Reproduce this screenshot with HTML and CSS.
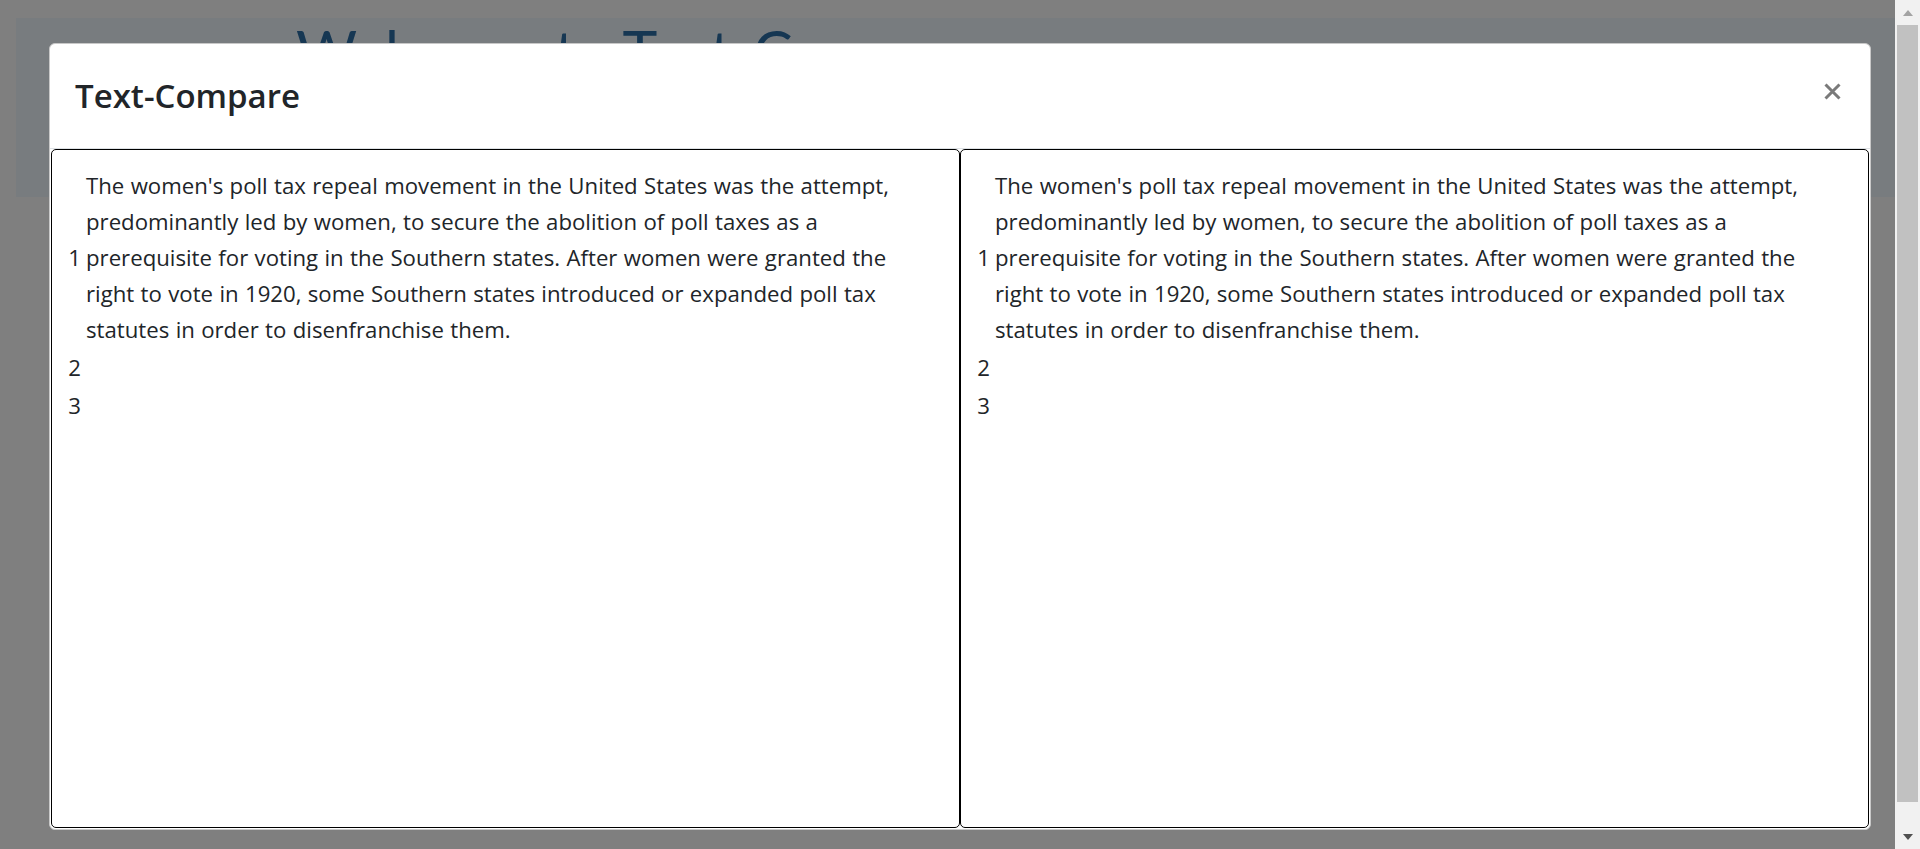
FILE: index.html
```html
<!DOCTYPE html>
<html lang="en">
<head>
<meta charset="utf-8">
<title>Text-Compare</title>
<link rel="stylesheet" href="styles.css">
</head>
<body>
<div class="page">
  <div class="viewport">
    <div class="jumbotron">
      <h1 class="hero-title">Welcome to Text-Compare</h1>
    </div>
    <div class="backdrop"></div>
    <div class="modal">
      <div class="modal-header">
        <h5 class="modal-title">Text-Compare</h5>
        <button class="close" type="button" aria-label="Close">
          <svg width="17" height="17" viewBox="0 0 17 17"><path d="M1.5 1.5 L15.5 15.5 M15.5 1.5 L1.5 15.5" stroke="currentColor" stroke-width="3" fill="none"/></svg>
        </button>
      </div>
      <div class="modal-body">
        <div class="pane">
          <div class="lines">
            <div class="ln">1</div>
            <div class="lt">The women's poll tax repeal movement in the United States was the attempt, predominantly led by women, to secure the abolition of poll taxes as a prerequisite for voting in the Southern states. After women were granted the right to vote in 1920, some Southern states introduced or expanded poll tax statutes in order to disenfranchise them.</div>
            <div class="ln">2</div>
            <div class="lt"></div>
            <div class="ln">3</div>
            <div class="lt"></div>
          </div>
        </div>
        <div class="pane">
          <div class="lines">
            <div class="ln">1</div>
            <div class="lt">The women's poll tax repeal movement in the United States was the attempt, predominantly led by women, to secure the abolition of poll taxes as a prerequisite for voting in the Southern states. After women were granted the right to vote in 1920, some Southern states introduced or expanded poll tax statutes in order to disenfranchise them.</div>
            <div class="ln">2</div>
            <div class="lt"></div>
            <div class="ln">3</div>
            <div class="lt"></div>
          </div>
        </div>
      </div>
    </div>
  </div>
  <div class="scrollbar">
    <div class="sb-btn">
      <svg width="10" height="6" viewBox="0 0 10 6"><path d="M0 6 L5 0 L10 6 Z" fill="#a3a3a3"/></svg>
    </div>
    <div class="sb-track"><div class="sb-thumb"></div></div>
    <div class="sb-btn">
      <svg width="10" height="6" viewBox="0 0 10 6"><path d="M0 0 L10 0 L5 6 Z" fill="#505050"/></svg>
    </div>
  </div>
</div>
</body>
</html>
```

FILE: styles.css
```css
html, body {
  margin: 0;
  padding: 0;
  height: 100%;
  overflow: hidden;
}

body {
  font-family: "Open Sans", "Noto Sans", sans-serif;
  color: #212529;
  background: #fff;
}

.page {
  display: flex;
  width: 1920px;
  height: 849px;
}

.viewport {
  flex: 1;
  position: relative;
  overflow: hidden;
  background: #fff;
}

.jumbotron {
  margin: 18px 0 0 16px;
  height: 179px;
  padding-left: 280px;
  background: #f0f8fe;
}

.hero-title {
  margin: 0;
  font-family: Lato, "Open Sans", sans-serif;
  font-size: 59px;
  font-weight: 400;
  line-height: 66px;
  color: #2c6ea6;
}

.backdrop {
  position: absolute;
  inset: 0;
  background: rgba(0, 0, 0, 0.5);
}

.modal {
  position: absolute;
  left: 49px;
  top: 43px;
  width: 1822px;
  height: 787px;
  box-sizing: border-box;
  border: 1px solid #c8c8c8;
  border-radius: 6px;
  background: #fff;
  display: flex;
  flex-direction: column;
}

.modal-header {
  flex: none;
  height: 104px;
  border-bottom: 1px solid #dee2e6;
  display: flex;
  align-items: center;
  justify-content: space-between;
  padding: 0 29px 0 25px;
}

.modal-title {
  margin: 0;
  font-size: 33px;
  font-weight: 600;
  line-height: 1.5;
  color: #212529;
}

.close {
  border: 0;
  background: transparent;
  padding: 0;
  margin: 0;
  color: #7a7a7a;
  display: flex;
  margin-top: -10px;
}

.modal-body {
  flex: 1;
  display: flex;
  padding: 0 1px 1px;
  min-height: 0;
}

.pane {
  width: 909px;
  box-sizing: border-box;
  border: 1px solid #000;
  border-radius: 5px;
  padding-top: 17px;
}

.lines {
  display: grid;
  grid-template-columns: 29px 839px;
  column-gap: 5px;
  font-size: 22.2px;
  word-spacing: 0.6px;
  line-height: 36px;
}

.ln {
  text-align: right;
  align-self: center;
  padding: 1px 0;
}

.lt {
  padding: 1px 0;
  min-height: 36px;
}

.scrollbar {
  width: 25px;
  background: #f1f1f1;
  display: flex;
  flex-direction: column;
}

.sb-btn {
  height: 25px;
  flex: none;
  display: flex;
  align-items: center;
  justify-content: center;
}

.sb-track {
  flex: 1;
  padding: 0 2px;
}

.sb-thumb {
  height: 777px;
  background: #c1c1c1;
}
```
